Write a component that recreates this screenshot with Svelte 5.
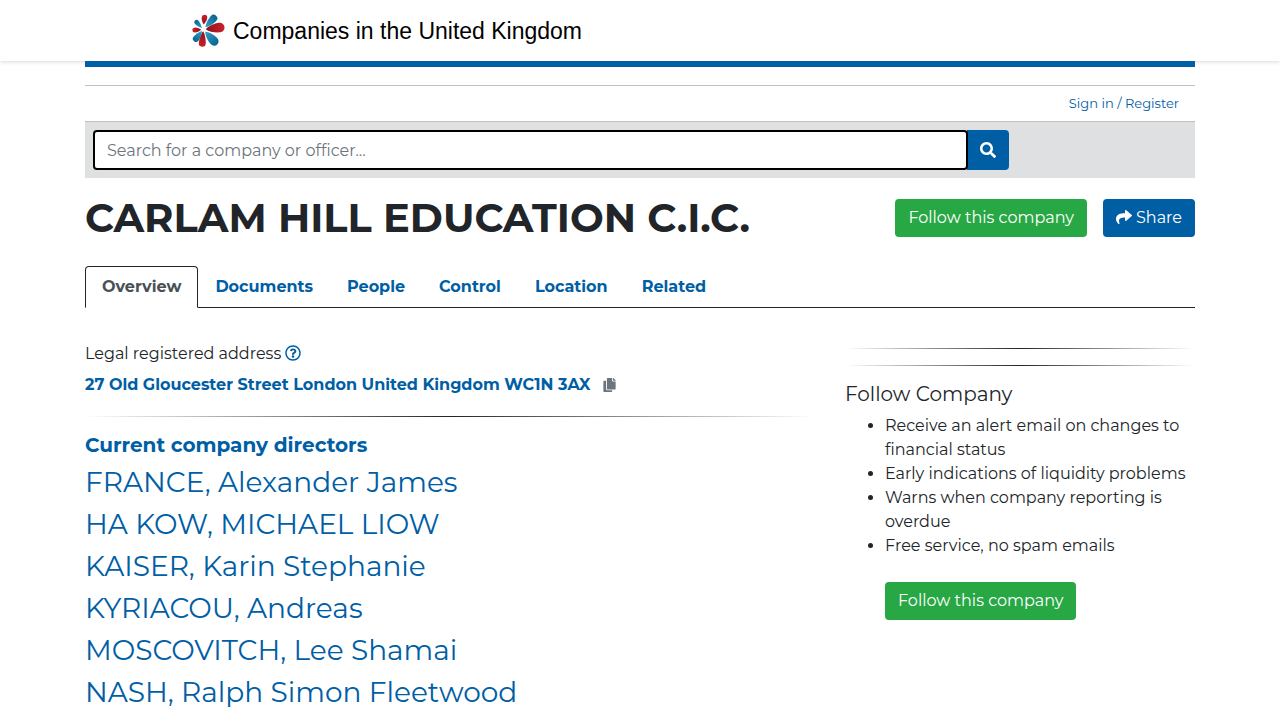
<script lang="ts">
  interface Petal {
    angle: number;
    start: number;
    end: number;
    width: number;
    fill: string;
  }

  const petals: Petal[] = [
    { angle: -84, start: 15, end: 45, width: 17, fill: "url(#petal-red)" },
    { angle: -47, start: 10, end: 57, width: 22, fill: "url(#petal-blue)" },
    { angle: -7, start: 8, end: 65, width: 29, fill: "url(#petal-red)" },
    { angle: 47, start: 9, end: 62, width: 27, fill: "url(#petal-blue)" },
    { angle: 94, start: 5, end: 52, width: 21, fill: "url(#petal-red)" },
    { angle: 128, start: 6, end: 45, width: 19, fill: "url(#petal-blue)" },
    { angle: 176, start: 6, end: 33, width: 15, fill: "url(#petal-red)" },
    { angle: 228, start: 6, end: 37, width: 14, fill: "url(#petal-blue)" },
  ];

  const tabs = ["Overview", "Documents", "People", "Control", "Location", "Related"];

  const directors = [
    "FRANCE, Alexander James",
    "HA KOW, MICHAEL LIOW",
    "KAISER, Karin Stephanie",
    "KYRIACOU, Andreas",
    "MOSCOVITCH, Lee Shamai",
    "NASH, Ralph Simon Fleetwood",
  ];

  const benefits = [
    "Receive an alert email on changes to financial status",
    "Early indications of liquidity problems",
    "Warns when company reporting is overdue",
    "Free service, no spam emails",
  ];

  let query = $state("");
  let active = $state("Overview");

  // Teardrop pointing along the x axis: sharp at the start, round at the end.
  function teardrop({ start, end, width }: Petal): string {
    const r = width / 2;
    const c = end - r;
    return `M${start} 0C${start + 8} ${-r * 0.6} ${c - r} ${-r} ${c} ${-r}A${r} ${r} 0 0 1 ${c} ${r}C${c - r} ${r} ${start + 8} ${r * 0.6} ${start} 0Z`;
  }
</script>

<header class="topbar">
  <div class="container">
    <a class="brand" href="#home">
      <svg class="brand__logo" viewBox="0 0 100 100" aria-hidden="true">
        <defs>
          <linearGradient id="petal-red">
            <stop offset="0" stop-color="#8f1218" />
            <stop offset="1" stop-color="#c9222c" />
          </linearGradient>
          <linearGradient id="petal-blue">
            <stop offset="0" stop-color="#2fa4cc" />
            <stop offset="1" stop-color="#07628f" />
          </linearGradient>
        </defs>
        <g transform="translate(34 47)">
          {#each petals as petal}
            <path d={teardrop(petal)} fill={petal.fill} transform="rotate({petal.angle})" />
          {/each}
        </g>
      </svg>
      <span class="brand__name">Companies in the United Kingdom</span>
    </a>
  </div>
</header>

<div class="container">
  <div class="account">
    <a href="#login">Sign in / Register</a>
  </div>

  <form class="search" onsubmit={(event) => event.preventDefault()}>
    <div class="search__group">
      <input
        class="search__input"
        type="text"
        placeholder="Search for a company or officer..."
        aria-label="Search for a company or officer"
        bind:value={query}
      />
      <button class="search__button" type="submit" aria-label="Search">
        <svg class="icon" viewBox="0 0 512 512" aria-hidden="true">
          <path d="M505 442.700 405.300 343c-4.500-4.500-10.600-7-17-7H372c27.600-35.300 44-79.700 44-128C416 93.100 322.900 0 208 0S0 93.100 0 208s93.100 208 208 208c48.300 0 92.700-16.400 128-44v16.300c0 6.400 2.500 12.500 7 17l99.700 99.700c9.400 9.400 24.600 9.400 33.900 0l28.300-28.300c9.400-9.400 9.400-24.600.1-34zM208 336c-70.700 0-128-57.200-128-128 0-70.700 57.200-128 128-128 70.700 0 128 57.200 128 128 0 70.700-57.200 128-128 128z" />
        </svg>
      </button>
    </div>
  </form>

  <div class="heading">
    <h1>CARLAM HILL EDUCATION C.I.C.</h1>
    <div class="heading__actions">
      <button class="btn btn--success" type="button">Follow this company</button>
      <button class="btn btn--primary" type="button">
        <svg class="icon" viewBox="0 0 512 512" aria-hidden="true">
          <path d="M503.700 189.800 327.700 37.900C312.300 24.500 288 35.300 288 56v80.100C127.400 137.900 0 170.100 0 322.300c0 61.400 39.600 122.300 83.300 154.100 13.700 9.900 33.100-2.500 28.100-18.600C66.100 312.800 132.900 274.300 288 272.100V360c0 20.700 24.300 31.500 39.700 18.200l176-152c11.100-9.600 11.100-26.800 0-36.400z" />
        </svg>
        Share
      </button>
    </div>
  </div>

  <nav class="tabs">
    {#each tabs as tab}
      <a
        class="tabs__link"
        class:tabs__link--active={tab === active}
        href="#{tab.toLowerCase()}"
        onclick={() => (active = tab)}
      >
        {tab}
      </a>
    {/each}
  </nav>

  <div class="columns">
    <main>
      <div class="label">
        Legal registered address
        <a class="help" href="#help" aria-label="About the registered address">
          <svg class="icon" viewBox="0 0 512 512" aria-hidden="true">
            <path d="M256 8C119 8 8 119.100 8 256c0 137 111 248 248 248s248-111 248-248C504 119.100 393 8 256 8zm0 448c-110.500 0-200-89.400-200-200 0-110.500 89.500-200 200-200 110.500 0 200 89.500 200 200 0 110.500-89.400 200-200 200zm107.200-255.200c0 67.100-72.400 68.100-72.400 92.900V300c0 6.600-5.400 12-12 12h-45.600c-6.600 0-12-5.400-12-12v-8.700c0-35.700 27.100-50 47.600-61.500 17.600-9.800 28.300-16.500 28.300-29.600 0-17.200-22-28.700-39.800-28.700-23.200 0-33.900 11-48.900 30-4.100 5.100-11.500 6.100-16.700 2.100l-27.800-21.100c-5.100-3.900-6.300-11.100-2.600-16.400C184.800 131.500 214.900 112 261.800 112c49.100 0 101.500 38.300 101.500 88.800zM298 368c0 23.200-18.800 42-42 42s-42-18.800-42-42 18.800-42 42-42 42 18.800 42 42z" />
          </svg>
        </a>
      </div>
      <div class="address">
        <a href="#location">27 Old Gloucester Street London United Kingdom WC1N 3AX</a>
        <button class="copy" type="button" aria-label="Copy address">
          <svg class="copy__icon" viewBox="0 0 448 512" aria-hidden="true">
            <path d="M320 448v40c0 13.300-10.700 24-24 24H24c-13.300 0-24-10.700-24-24V120c0-13.300 10.700-24 24-24h72v296c0 30.900 25.100 56 56 56h168zm0-344V0H152c-13.300 0-24 10.700-24 24v368c0 13.300 10.700 24 24 24h272c13.300 0 24-10.700 24-24V128H344c-13.200 0-24-10.800-24-24zm121-31L375 7A24 24 0 0 0 358 0h-6v96h96v-6.100a24 24 0 0 0-7-16.900z" />
          </svg>
        </button>
      </div>
      <hr />
      <h2>Current company directors</h2>
      {#each directors as director}
        <h3><a href="#people">{director}</a></h3>
      {/each}
    </main>

    <aside>
      <hr />
      <hr />
      <h4>Follow Company</h4>
      <ul>
        {#each benefits as benefit}
          <li>{benefit}</li>
        {/each}
      </ul>
      <button class="btn btn--success aside__follow" type="button">Follow this company</button>
    </aside>
  </div>
</div>

<style>
  :global(body) {
    margin: 0;
    background: #fff;
    color: #212529;
    font-family: Montserrat, Inter, sans-serif;
    font-size: 16px;
    line-height: 24px;
  }

  a {
    color: #005ea5;
    text-decoration: none;
  }

  .container {
    box-sizing: border-box;
    width: 100%;
    max-width: 1140px;
    margin: 0 auto;
    padding: 0 15px;
  }

  .topbar {
    box-shadow: 0 1px 4px rgba(0, 0, 0, 0.15);
  }

  .brand {
    display: flex;
    align-items: center;
    gap: 8px;
    height: 61px;
    padding-left: 107px;
    color: #000;
    font-family: "Liberation Sans", Arial, sans-serif;
    font-size: 23px;
  }

  .brand__logo {
    width: 33px;
    height: 33px;
  }

  .account {
    position: relative;
    display: flex;
    justify-content: flex-end;
    margin-top: 24px;
    padding: 5px 16px 6px;
    border-top: 1px solid #bfc1c3;
    border-bottom: 1px solid #bfc1c3;
    font-size: 13px;
  }

  /* Brand stripe hanging from the header */
  .account::before {
    content: "";
    position: absolute;
    top: -25px;
    right: 0;
    left: 0;
    height: 6px;
    background: #005ea5;
  }

  .search {
    padding: 8px;
    background: #dee0e2;
  }

  .search__group {
    display: flex;
    max-width: 916px;
  }

  .search__input {
    flex: 1;
    box-sizing: border-box;
    min-width: 0;
    height: 40px;
    padding: 0 12px;
    border: 2px solid #000;
    border-radius: 4px;
    background: #fff;
    color: #495057;
    font: inherit;
    outline: 0;
    z-index: 1;
  }

  .search__input::placeholder {
    color: #6c757d;
    opacity: 1;
  }

  .search__button {
    width: 42px;
    margin-left: -1px;
    padding: 0;
    border: 0;
    border-radius: 0 4px 4px 0;
    background: #005ea5;
    color: #fff;
  }

  .icon {
    width: 16px;
    height: 16px;
    fill: currentColor;
    vertical-align: -2px;
  }

  .heading {
    display: flex;
    align-items: center;
    justify-content: space-between;
    margin: 16px 0 24px;
  }

  h1 {
    margin: 0;
    font-size: 40px;
    font-weight: 700;
    line-height: 48px;
  }

  .heading__actions {
    display: flex;
    gap: 16px;
  }

  .btn {
    height: 38px;
    padding: 0 13px;
    border: 0;
    border-radius: 4px;
    color: #fff;
    font: inherit;
    white-space: nowrap;
  }

  .btn--success {
    background: #28a745;
  }

  .btn--primary {
    background: #005ea5;
  }

  .tabs {
    display: flex;
    border-bottom: 1px solid #212529;
  }

  .tabs__link {
    margin-bottom: -1px;
    padding: 8px 16px;
    border: 1px solid transparent;
    border-radius: 4px 4px 0 0;
    font-weight: 700;
  }

  .tabs__link--active {
    border-color: #212529 #212529 #fff;
    background: #fff;
    color: #495057;
  }

  .columns {
    display: grid;
    grid-template-columns: minmax(0, 1fr) 350px;
    gap: 30px;
    padding-top: 32px;
  }

  .label {
    padding-top: 2px;
  }

  .address {
    display: flex;
    align-items: center;
    gap: 12px;
    margin-top: 7px;
    font-weight: 700;
  }

  .copy {
    display: flex;
    padding: 0;
    border: 0;
    background: none;
    color: #6c757d;
  }

  .copy__icon {
    width: 13px;
    height: 14px;
    fill: currentColor;
  }

  hr {
    height: 1px;
    margin: 19px 0 16px;
    border: 0;
    background: linear-gradient(to right, transparent, #212529, transparent);
  }

  h2 {
    margin: 0 0 4px;
    color: #005ea5;
    font-size: 20px;
    font-weight: 700;
    line-height: 24px;
  }

  h3 {
    margin: 0;
    font-size: 28px;
    font-weight: 400;
    line-height: 42px;
  }

  aside hr {
    margin: 8px 0 16px;
  }

  aside hr + hr {
    margin-top: 0;
  }

  h4 {
    margin: 0 0 8px;
    font-size: 20px;
    font-weight: 400;
    line-height: 24px;
  }

  ul {
    margin: 0 0 24px;
    padding-left: 40px;
  }

  .aside__follow {
    margin-left: 40px;
  }
</style>
